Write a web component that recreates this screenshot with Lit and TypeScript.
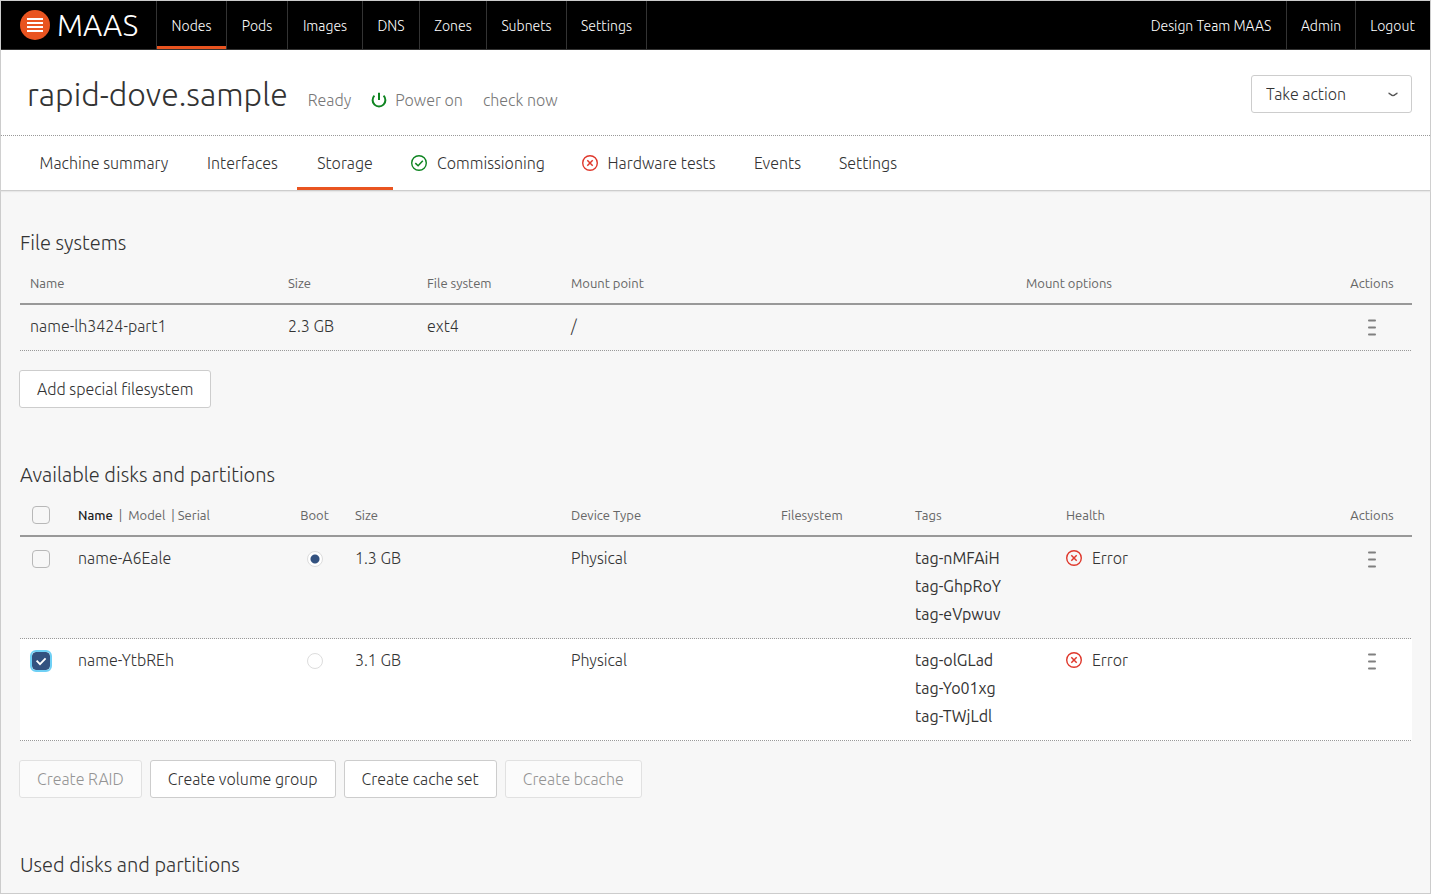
import { LitElement, html, css } from "lit";
import { customElement, state } from "lit/decorators.js";
import { classMap } from "lit/directives/class-map.js";

const icons = {
  logo: html`<svg class="logo-mark" viewBox="0 0 30 30" aria-hidden="true">
    <circle cx="15" cy="15" r="15" fill="#e95420" />
    <path d="M7 9h16M7 13h16M7 17h16M7 21h16" stroke="#fff" stroke-width="2" />
  </svg>`,
  power: html`<svg class="icon" viewBox="0 0 16 16" aria-hidden="true">
    <path d="M3.4 3.6A6.4 6.4 0 1 0 12.6 3.6M8 .8V8" fill="none" stroke="#0e8420" stroke-width="2" />
  </svg>`,
  success: html`<svg class="icon" viewBox="0 0 16 16" aria-hidden="true">
    <circle cx="8" cy="8" r="7.3" fill="none" stroke="#0e8420" stroke-width="1.4" />
    <path d="M4.3 8.1l2.8 2.7 4.7-5.1" fill="none" stroke="#0e8420" stroke-width="1.5" />
  </svg>`,
  error: html`<svg class="icon" viewBox="0 0 16 16" aria-hidden="true">
    <circle cx="8" cy="8" r="7.3" fill="none" stroke="#df382c" stroke-width="1.4" />
    <path d="M5.3 5.3l5.4 5.4M10.7 5.3l-5.4 5.4" fill="none" stroke="#df382c" stroke-width="1.5" />
  </svg>`,
  chevron: html`<svg class="chevron" viewBox="0 0 10 5" aria-hidden="true">
    <path d="M.5 1.2C2 1.2 3 3.6 5 3.6S8 1.2 9.5 1.2" fill="none" stroke="#555" stroke-width="1.4" />
  </svg>`,
  menu: html`<svg class="menu-icon" viewBox="0 0 8 17" aria-hidden="true">
    <path d="M.9 1.5h6.2M.9 8.5h6.2M.9 15.5h6.2" stroke="#808080" stroke-width="1.8" stroke-linecap="round" />
  </svg>`,
};

@customElement("app-root")
export class AppRoot extends LitElement {
  static styles = css`
    :host {
      display: block;
      box-sizing: border-box;
      min-height: 100vh;
      border: 1px solid #ccc;
      background: #f7f7f7;
      color: #333;
      font: 300 16px/28px Ubuntu, "Noto Sans", "Open Sans", sans-serif;
    }
    * { box-sizing: border-box; }
    a { color: inherit; text-decoration: none; }
    h1, h2 { margin: 0; font-weight: 300; }
    .icon { width: 16px; height: 16px; flex: none; }

    .topbar { display: flex; height: 49px; background: #000; color: #fff; border-bottom: 1px solid #333; font-size: 14px; }
    .logo { display: flex; align-items: center; gap: 7px; width: 155px; padding-left: 19px; font-size: 30px; }
    .logo-mark { width: 30px; height: 30px; }
    .links { display: grid; grid-template-columns: 70px 61px 75px 57px 67px 80px 80px; border-right: 1px solid #333; }
    .account { display: grid; grid-template-columns: 150px 69px 74px; margin-left: auto; padding-right: 1px; }
    .nav-link { display: flex; align-items: center; justify-content: center; padding-top: 2px; border-left: 1px solid #333; white-space: nowrap; }
    .nav-link.plain { border-left: 0; }
    .nav-link.active { box-shadow: inset 0 -3px #e95420; }

    .header { display: flex; align-items: center; justify-content: space-between; height: 86px; padding: 3px 18px 0 26px; background: #fff; border-bottom: 1px dotted #999; }
    .identity { display: flex; align-items: baseline; gap: 20px; color: #777; white-space: nowrap; }
    .title { color: #333; font-size: 32px; line-height: 40px; }
    .power .icon { margin-right: 8px; vertical-align: -2px; }
    .select { display: grid; align-items: center; width: 161px; }
    .select > * { grid-area: 1 / 1; }
    .select select { appearance: none; width: 100%; height: 38px; padding: 0 14px; border: 1px solid #cdcdcd; border-radius: 3px; background: #fff; color: inherit; font: inherit; }
    .chevron { width: 10px; height: 5px; justify-self: end; margin-right: 14px; pointer-events: none; }

    .tabs { display: grid; grid-template-columns: 168px 109px 96px 170px 171px 87px 94px; height: 55px; padding-left: 19px; background: #fff; border-bottom: 1px solid #cdcdcd; box-shadow: 0 1px 1px #e8e8e8; }
    .tab { display: flex; align-items: center; justify-content: center; gap: 10px; white-space: nowrap; }
    .tab.active { box-shadow: inset 0 -3px #e95420; }

    .content { display: grid; gap: 50px; padding: 35px 18px 6px; }
    .heading { margin-bottom: 3px; padding-left: 1px; font-size: 20px; line-height: 34px; }
    .table { width: calc(100% - 1px); margin-left: 1px; table-layout: fixed; border-collapse: collapse; }
    .table th { height: 41px; padding: 0 10px; color: #666; font-size: 13px; font-weight: 400; line-height: 20px; text-align: left; white-space: nowrap; }
    .table td { padding: 7px 10px 11px; vertical-align: top; white-space: nowrap; }
    .table thead tr { border-bottom: 2px solid #999; }
    .table tbody tr { background: repeating-linear-gradient(90deg, #999 0 1px, transparent 1px 2px) bottom / 100% 1px no-repeat; }
    .table .center { text-align: center; padding-left: 0; padding-right: 0; }
    .table .selected { background-color: #fff; }
    .sort { padding: 0; border: 0; background: none; color: inherit; font: inherit; }
    .sort.current { color: #222; font-weight: 500; }
    .w-fs-name { width: 258px; }
    .w-fs-size { width: 139px; }
    .w-fs-type { width: 144px; }
    .w-fs-options { width: 316px; }
    .w-actions { width: 80px; }
    .w-check { width: 48px; }
    .w-name { width: 216px; }
    .w-boot { width: 61px; }
    .w-size { width: 216px; }
    .w-device { width: 210px; }
    .w-filesystem { width: 134px; }
    .w-tags { width: 151px; }
    .tag { display: block; font-weight: 400; }
    .health { display: flex; align-items: center; gap: 10px; }
    .menu { display: inline-flex; align-items: center; justify-content: center; width: 28px; height: 28px; padding: 3px 0 0; border: 0; background: none; vertical-align: top; }
    .menu-icon { width: 8px; height: 17px; }
    .box { appearance: none; display: block; width: 18px; height: 18px; margin: 6px 2px 4px; border: 1px solid #b8b8b8; border-radius: 4px; background: #f7f7f7; }
    .table th .box { margin: 5px 2px; }
    .box:checked { border-color: #335280; background: #335280 url("data:image/svg+xml,%3Csvg xmlns='http://www.w3.org/2000/svg' viewBox='0 0 16 16'%3E%3Cpath d='M3.6 7.6l3.4 3.6 5.6-5.8' fill='none' stroke='%23fff' stroke-width='1.8'/%3E%3C/svg%3E"); outline: 2px solid #6fd0f5; }
    .radio { appearance: none; display: block; width: 16px; height: 16px; margin: 7px auto; border: 1px solid #ddd; border-radius: 50%; background: #fff; }
    .radio:checked { background: radial-gradient(circle, #335280 4px, #fff 5px); }

    .actions { display: flex; gap: 8px; margin-top: 19px; }
    .button { height: 38px; padding: 0 17px; border: 1px solid #cdcdcd; border-radius: 3px; background: #fff; color: #333; font: inherit; white-space: nowrap; }
    .button:disabled { opacity: 0.5; }
  `;

  @state() private disks = [
    { name: "name-A6Eale", boot: true, size: "1.3 GB", type: "Physical", tags: ["tag-nMFAiH", "tag-GhpRoY", "tag-eVpwuv"], selected: false },
    { name: "name-YtbREh", boot: false, size: "3.1 GB", type: "Physical", tags: ["tag-olGLad", "tag-Yo01xg", "tag-TWjLdl"], selected: true },
  ];

  private toggle(index: number) {
    this.disks = this.disks.map((d, i) => (i === index ? { ...d, selected: !d.selected } : d));
  }

  private menuButton(name: string) {
    return html`<button class="menu" aria-label="Actions for ${name}">${icons.menu}</button>`;
  }

  render() {
    return html`
      <nav class="topbar">
        <a class="logo" href="#">${icons.logo}<span>MAAS</span></a>
        <div class="links">
          ${["Nodes", "Pods", "Images", "DNS", "Zones", "Subnets", "Settings"].map(
            (l, i) => html`<a href="#" class=${classMap({ "nav-link": true, active: i === 0 })}>${l}</a>`
          )}
        </div>
        <div class="account">
          <a class="nav-link plain" href="#">Design Team MAAS</a>
          <a class="nav-link" href="#">Admin</a>
          <a class="nav-link" href="#">Logout</a>
        </div>
      </nav>
      <header class="header">
        <div class="identity">
          <h1 class="title">rapid-dove.sample</h1>
          <span>Ready</span>
          <span class="power">${icons.power}Power on</span>
          <a href="#">check now</a>
        </div>
        <div class="select">
          <select aria-label="Take action"><option>Take action</option></select>
          ${icons.chevron}
        </div>
      </header>
      <nav class="tabs">
        <a class="tab" href="#">Machine summary</a>
        <a class="tab" href="#">Interfaces</a>
        <a class="tab active" href="#">Storage</a>
        <a class="tab" href="#">${icons.success}Commissioning</a>
        <a class="tab" href="#">${icons.error}Hardware tests</a>
        <a class="tab" href="#">Events</a>
        <a class="tab" href="#">Settings</a>
      </nav>
      <main class="content">
        <section>
          <h2 class="heading">File systems</h2>
          <table class="table">
            <thead>
              <tr>
                <th class="w-fs-name">Name</th>
                <th class="w-fs-size">Size</th>
                <th class="w-fs-type">File system</th>
                <th>Mount point</th>
                <th class="w-fs-options">Mount options</th>
                <th class="w-actions center">Actions</th>
              </tr>
            </thead>
            <tbody>
              <tr>
                <td>name-lh3424-part1</td>
                <td>2.3 GB</td>
                <td>ext4</td>
                <td>/</td>
                <td></td>
                <td class="center">${this.menuButton("name-lh3424-part1")}</td>
              </tr>
            </tbody>
          </table>
          <div class="actions"><button class="button">Add special filesystem</button></div>
        </section>
        <section>
          <h2 class="heading">Available disks and partitions</h2>
          <table class="table">
            <thead>
              <tr>
                <th class="w-check"><input class="box" type="checkbox" aria-label="Select all disks" /></th>
                <th class="w-name">
                  <button class="sort current">Name</button>&nbsp; |&nbsp; <button class="sort">Model</button>&nbsp; | <button class="sort">Serial</button>
                </th>
                <th class="w-boot center">Boot</th>
                <th class="w-size">Size</th>
                <th class="w-device">Device Type</th>
                <th class="w-filesystem">Filesystem</th>
                <th class="w-tags">Tags</th>
                <th>Health</th>
                <th class="w-actions center">Actions</th>
              </tr>
            </thead>
            <tbody>
              ${this.disks.map(
                (d, i) => html`<tr class=${classMap({ selected: d.selected })}>
                  <td><input class="box" type="checkbox" id="disk-${i}" .checked=${d.selected} @change=${() => this.toggle(i)} /></td>
                  <td><label for="disk-${i}">${d.name}</label></td>
                  <td class="center"><input class="radio" type="radio" name="boot" aria-label="Boot from ${d.name}" .checked=${d.boot} /></td>
                  <td>${d.size}</td>
                  <td>${d.type}</td>
                  <td></td>
                  <td>${d.tags.map((t) => html`<span class="tag">${t}</span>`)}</td>
                  <td><span class="health">${icons.error}Error</span></td>
                  <td class="center">${this.menuButton(d.name)}</td>
                </tr>`
              )}
            </tbody>
          </table>
          <div class="actions">
            <button class="button" disabled>Create RAID</button>
            <button class="button">Create volume group</button>
            <button class="button">Create cache set</button>
            <button class="button" disabled>Create bcache</button>
          </div>
        </section>
        <section>
          <h2 class="heading">Used disks and partitions</h2>
        </section>
      </main>
    `;
  }
}
